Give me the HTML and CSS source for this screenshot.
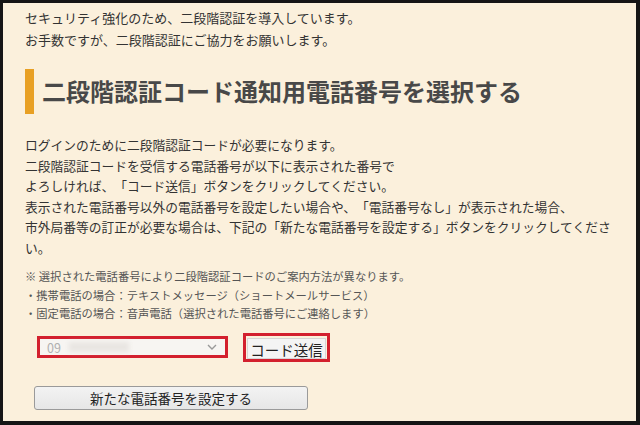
FILE: index.html
```html
<!DOCTYPE html>
<html lang="ja">
<head>
    <meta charset="UTF-8">
    <meta name="viewport" content="width=device-width, initial-scale=1.0">
    <title>二段階認証</title>
    <link rel="stylesheet" href="styles.css">
</head>
<body>
    <div class="frame">
        <div class="intro">
            <p>セキュリティ強化のため、二段階認証を導入しています。</p>
            <p>お手数ですが、二段階認証にご協力をお願いします。</p>
        </div>

        <h1 class="title">二段階認証コード通知用電話番号を選択する</h1>

        <p class="lead">
            ログインのために二段階認証コードが必要になります。<br>
            二段階認証コードを受信する電話番号が以下に表示された番号で<br>
            よろしければ、「コード送信」ボタンをクリックしてください。<br>
            表示された電話番号以外の電話番号を設定したい場合や、「電話番号なし」が表示された場合、<br>
            市外局番等の訂正が必要な場合は、下記の「新たな電話番号を設定する」ボタンをクリックしてください。
        </p>

        <div class="note">
            <p>※ 選択された電話番号により二段階認証コードのご案内方法が異なります。</p>
            <p>・携帯電話の場合：テキストメッセージ（ショートメールサービス）</p>
            <p>・固定電話の場合：音声電話（選択された電話番号にご連絡します）</p>
        </div>

        <div class="controls">
            <div class="mark select-mark">
                <div class="phone-select">
                    <span class="num">09</span>
                    <span class="blur"></span>
                    <svg class="chev" width="10" height="6" viewBox="0 0 10 6"><path d="M1 1 L5 5 L9 1" fill="none" stroke="#999" stroke-width="1.4"/></svg>
                </div>
            </div>
            <div class="mark send-mark">
                <button class="send-btn">コード送信</button>
            </div>
        </div>

        <button class="new-btn">新たな電話番号を設定する</button>
    </div>
</body>
</html>
```

FILE: styles.css
```css
body {
    margin: 0;
    font-family: "Noto Sans CJK JP", "Noto Sans", sans-serif;
    color: #333;
    text-spacing-trim: space-all;
}
p {
    margin: 0;
}
.frame {
    width: 640px;
    height: 425px;
    box-sizing: border-box;
    border: 3px solid #151515;
    border-right-width: 4px;
    border-bottom-width: 4px;
    background-color: #fbf0dc;
    padding: 4px 10px 0 22px;
    overflow: hidden;
}
.intro p {
    font-size: 13px;
    line-height: 22px;
}
.title {
    margin: 18px 0 0 0;
    height: 45px;
    line-height: 43px;
    border-left: 9px solid #e8a024;
    padding-left: 8px;
    font-size: 24px;
    font-weight: bold;
    color: #484848;
}
.lead {
    margin-top: 21px;
    font-size: 12.75px;
    line-height: 20.5px;
}
.note {
    margin-top: 9px;
    font-size: 11.3px;
    line-height: 18.5px;
    color: #555;
}
.controls {
    display: flex;
    align-items: center;
    gap: 15px;
    margin-top: 10px;
    margin-left: 12px;
}
.mark {
    border: 3px solid #d3202e;
    box-sizing: border-box;
}
.select-mark {
    width: 191px;
    height: 22px;
}
.phone-select {
    display: flex;
    align-items: center;
    height: 100%;
    background: #f7f5f2;
    padding: 0 8px 0 7px;
    font-size: 12.5px;
    color: #b0b0b0;
}
.phone-select .blur {
    width: 60px;
    height: 10px;
    margin-left: 8px;
    background: #e9e6e2;
    filter: blur(2px);
}
.phone-select .chev {
    margin-left: auto;
}
.send-mark {
    width: 87px;
    height: 29px;
    padding: 1px;
}
.send-btn {
    width: 100%;
    height: 100%;
    border: 1px solid #d6d6d6;
    background: #f4f4f4;
    font-family: inherit;
    font-size: 14.5px;
    color: #222;
    padding: 0;
}
.new-btn {
    display: block;
    margin: 24px 0 0 9px;
    width: 274px;
    height: 24px;
    border: 1px solid #9a9a9a;
    border-radius: 3px;
    background: linear-gradient(#f3f3f3, #e6e6e6);
    font-family: inherit;
    font-size: 13.5px;
    color: #222;
    padding: 0;
}
```
